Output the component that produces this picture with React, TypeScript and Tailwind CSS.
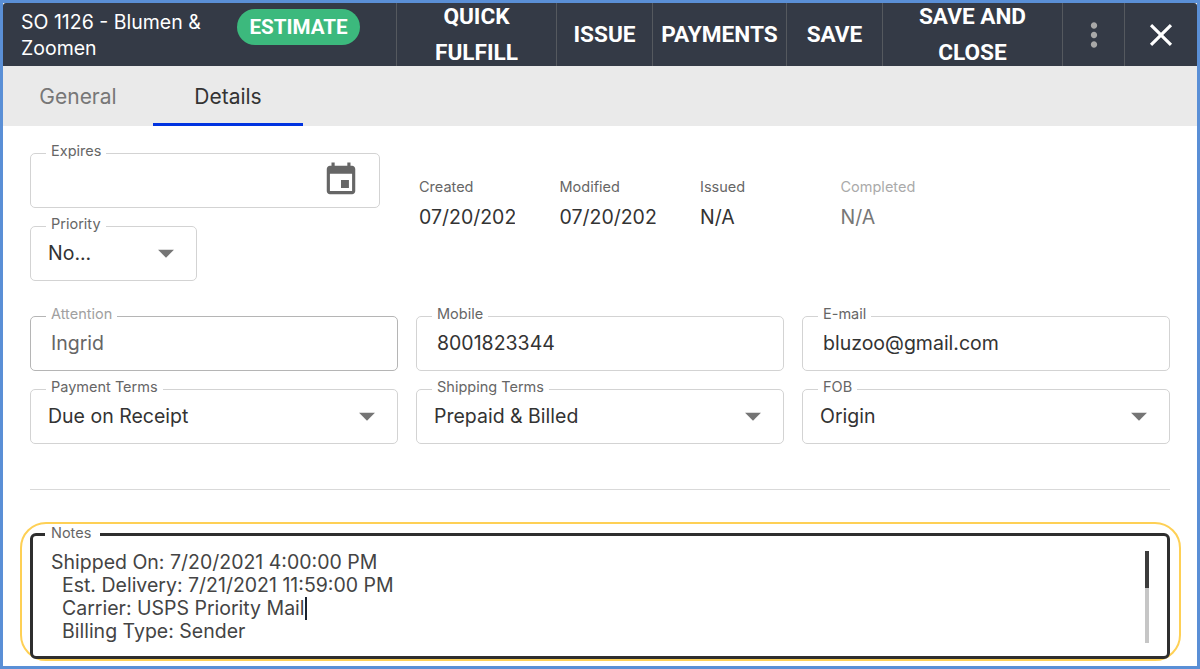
import type { ReactNode } from "react";

const ACTIONS = [
  { label: "QUICK FULFILL", width: "w-[160px]", pad: "px-[30px]" },
  { label: "ISSUE", width: "w-[96px]", pad: "px-1" },
  { label: "PAYMENTS", width: "w-[134px]", pad: "px-1" },
  { label: "SAVE", width: "w-[96px]", pad: "px-1" },
  { label: "SAVE AND CLOSE", width: "w-[180px]", pad: "px-[30px]" },
];

const STATS = [
  { label: "Created", value: "07/20/2021", muted: false },
  { label: "Modified", value: "07/20/2021", muted: false },
  { label: "Issued", value: "N/A", muted: false },
  { label: "Completed", value: "N/A", muted: true },
];

function Caret() {
  return (
    <svg viewBox="0 0 24 24" className="h-[38px] w-[38px] shrink-0 fill-[#757575]">
      <path d="M7 10l5 5 5-5z" />
    </svg>
  );
}

function Field({
  label,
  className,
  inner,
  labelColor = "text-[#666]",
  border = "border-[#d3d3d3]",
  children,
}: {
  label: string;
  className: string;
  inner: string;
  labelColor?: string;
  border?: string;
  children: ReactNode;
}) {
  return (
    <fieldset className={`min-w-0 rounded-[5px] border ${border} ${className}`}>
      <legend className={`ml-[15px] -translate-y-[2px] px-[5px] text-[14.5px] leading-[16px] ${labelColor}`}>{label}</legend>
      <div className={`flex h-[38px] items-center ${inner}`}>{children}</div>
    </fieldset>
  );
}

function SelectField({ label, value, className }: { label: string; value: string; className: string }) {
  return (
    <Field label={label} className={`h-[63px] ${className}`} inner="pl-[17px] pr-[11px]">
      <span className="mt-[2px] flex-1 truncate text-[19.5px] text-[#333]">{value}</span>
      <Caret />
    </Field>
  );
}

function TextField({ label, value, muted = false }: { label: string; value: string; muted?: boolean }) {
  return (
    <Field
      label={label}
      className="h-[63px]"
      inner="pl-[20px]"
      labelColor={muted ? "text-[#a0a0a0]" : "text-[#666]"}
      border={muted ? "border-[#b5b5b5]" : "border-[#d3d3d3]"}
    >
      <span className={`mt-[2px] text-[19.5px] ${muted ? "text-[#666]" : "text-[#333]"}`}>{value}</span>
    </Field>
  );
}

export default function App() {
  return (
    <div className="h-[669px] w-[1200px] overflow-hidden border-[3px] border-[#5a8fd6] bg-white font-['Inter',sans-serif]">
      {/* toolbar */}
      <div className="flex h-[63px] items-stretch overflow-hidden rounded-t-[3px] bg-[#343a46] text-white">
        <div className="flex w-[393px] items-start pl-[18px]">
          <div className="w-[200px] pt-[6px] text-[19.5px] leading-[26px]">SO 1126 - Blumen &amp; Zoomen</div>
          <div className="mt-[6px] ml-[16px] flex h-[36px] w-[123px] items-center justify-center rounded-full bg-[#3cb97d] font-['Roboto',sans-serif] text-[20.6px] font-bold">
            ESTIMATE
          </div>
        </div>
        {ACTIONS.map((a) => (
          <div
            key={a.label}
            className={`flex shrink-0 items-center justify-center border-l border-[#55595f] text-center font-['Roboto',sans-serif] text-[22.6px] leading-[36px] font-bold ${a.width} ${a.pad}`}
          >
            {a.label}
          </div>
        ))}
        <div className="flex w-[62px] shrink-0 items-center justify-center border-l border-[#55595f]">
          <svg viewBox="0 0 24 24" className="h-[38px] w-[38px] fill-[#a8a8a8]">
            <path d="M12 8c1.1 0 2-.9 2-2s-.9-2-2-2-2 .9-2 2 .9 2 2 2zm0 2c-1.1 0-2 .9-2 2s.9 2 2 2 2-.9 2-2-.9-2-2-2zm0 6c-1.1 0-2 .9-2 2s.9 2 2 2 2-.9 2-2-.9-2-2-2z" />
          </svg>
        </div>
        <div className="flex flex-1 items-center justify-center border-l border-[#55595f]">
          <svg viewBox="0 0 24 24" className="h-[38px] w-[38px] fill-white">
            <path d="M19 6.41L17.59 5 12 10.59 6.41 5 5 6.41 10.59 12 5 17.59 6.41 19 12 13.41 17.59 19 19 17.59 13.41 12z" />
          </svg>
        </div>
      </div>

      {/* tabs */}
      <div className="flex h-[60px] bg-[#eaeaea] text-[21px]">
        <div className="flex w-[150px] items-center justify-center border-b-[3px] border-transparent pt-[4px] text-[#777]">
          General
        </div>
        <div className="flex w-[150px] items-center justify-center border-b-[3px] border-[#0033e0] pt-[4px] text-[#333]">
          Details
        </div>
      </div>

      <div className="px-[27px] pt-[19px]">
        {/* expires, priority and dates */}
        <div className="flex">
          <div className="flex w-[350px] shrink-0 flex-col gap-[10px]">
            <Field label="Expires" className="h-[63px]" inner="justify-end pr-[19px]">
              <svg viewBox="0 0 24 24" className="h-[38px] w-[38px] fill-[#666]">
                <path d="M17 12h-5v5h5v-5zM16 1v2H8V1H6v2H5c-1.11 0-1.99.9-1.99 2L3 19c0 1.1.89 2 2 2h14c1.1 0 2-.9 2-2V5c0-1.1-.9-2-2-2h-1V1h-2zm3 18H5V8h14v11z" />
              </svg>
            </Field>
            <SelectField label="Priority" value="No..." className="w-[167px]" />
          </div>
          <div className="ml-[39px] flex pt-[34px]">
            {STATS.map((s) => (
              <div key={s.label} className="w-[140.5px]">
                <div className={`text-[14.5px] leading-[16px] ${s.muted ? "text-[#aaa]" : "text-[#666]"}`}>{s.label}</div>
                <div
                  className={`mt-[10px] w-[96px] overflow-hidden text-[19.5px] leading-[24px] whitespace-nowrap ${
                    s.muted ? "text-[#777]" : "text-[#333]"
                  }`}
                >
                  {s.value}
                </div>
              </div>
            ))}
          </div>
        </div>

        {/* contact */}
        <div className="mt-[27px] grid grid-cols-3 gap-x-[18px] gap-y-[10px]">
          <TextField label="Attention" value="Ingrid" muted />
          <TextField label="Mobile" value="8001823344" />
          <TextField label="E-mail" value="bluzoo@gmail.com" />
          <SelectField label="Payment Terms" value="Due on Receipt" className="" />
          <SelectField label="Shipping Terms" value="Prepaid &amp; Billed" className="" />
          <SelectField label="FOB" value="Origin" className="" />
        </div>

        <div className="mt-[45px] h-px bg-[#d9d9d9]" />

        {/* notes */}
        <div className="mt-[32px] -mr-[11px] -ml-[10px] rounded-[26px] border-2 border-[#fed055] pt-[2px] pr-[9px] pl-[8px]">
          <fieldset className="relative h-[133px] min-w-0 rounded-[6px] border-[3px] border-[#2e2e2e]">
            <legend className="ml-[12px] -translate-y-[1px] pr-[9px] pl-[6px] text-[14.5px] leading-[16px] text-[#666]">
              Notes
            </legend>
            <div className="pt-[9px] pl-[18px] text-[19.5px] leading-[23px] whitespace-pre text-[#444]">
              <div>Shipped On: 7/20/2021 4:00:00 PM</div>
              <div>{"  "}Est. Delivery: 7/21/2021 11:59:00 PM</div>
              <div>
                {"  "}Carrier: USPS Priority Mail
                <span className="inline-block h-[23px] w-[2px] bg-[#1a2330] align-top" />
              </div>
              <div>{"  "}Billing Type: Sender</div>
            </div>
            <div className="absolute top-[9px] right-[18px] h-[92px] w-[4px] bg-[#c6c6c6]">
              <div className="h-[37px] bg-[#3c3c3c]" />
            </div>
          </fieldset>
        </div>
      </div>
    </div>
  );
}
